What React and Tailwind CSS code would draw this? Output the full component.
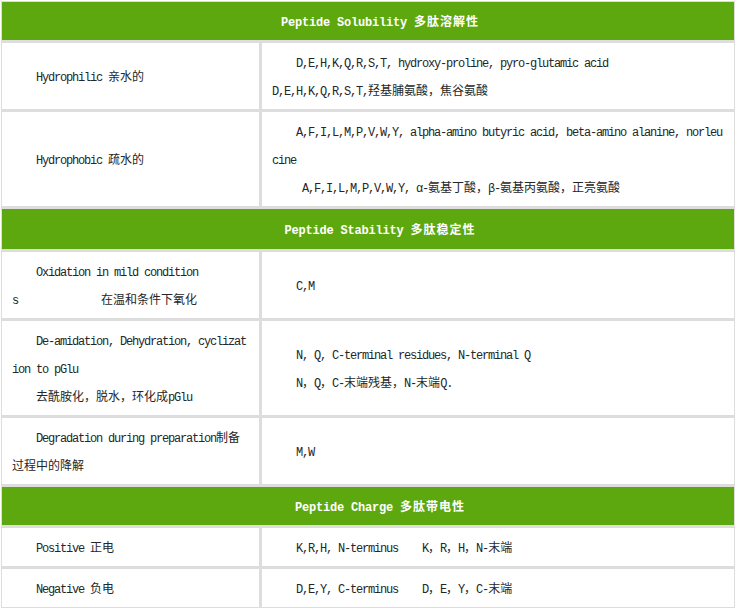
import React from "react";

const CJK = /([\u2E80-\u9FFF\u3000-\u303F\uFF00-\uFFEF]+)/;

// split a string into latin / cjk runs so each gets its own font
const Mix = ({ text, cjk = "tracking-normal" }) =>
  text.split(CJK).map((part, i) =>
    i % 2 ? (
      <span
        key={i}
        className={"font-['Noto_Sans_CJK_SC',sans-serif] leading-[12px] " + cjk}
      >
        {part}
      </span>
    ) : (
      <span key={i}>{part}</span>
    )
  );

const Header = ({ title, pad = "pt-[7px] pb-[3px]" }) => (
  <div
    className={
      "bg-[#5ea80f] text-center indent-[24px] text-[12px] leading-[28px] font-bold text-white tracking-[-0.2px] whitespace-pre-wrap " +
      pad
    }
  >
    <Mix text={title} cjk="tracking-[1px]" />
  </div>
);

const Cell = ({ children }) => (
  <div className="bg-white px-[10px] pt-[7px] pb-[3px] flex flex-col justify-center text-[12px] leading-[28px] text-[#262626] tracking-[-1.2px] whitespace-pre-wrap">
    {children}
  </div>
);

const Row = ({ left, right }) => (
  <div className="grid grid-cols-[257px_1fr] gap-[3px]">
    <Cell>{left}</Cell>
    <Cell>{right}</Cell>
  </div>
);

export default function App() {
  return (
    <div className="min-h-screen bg-white pt-px pl-px font-['Liberation_Mono','Noto_Sans_CJK_SC',monospace]">
      <div className="w-[734px] bg-[#dddddd] p-px flex flex-col gap-[3px]">
        <Header title="Peptide Solubility 多肽溶解性" />
        <Row
          left={
            <p className="indent-[24px]">
              <Mix text="Hydrophilic 亲水的" />
            </p>
          }
          right={
            <>
              <p className="indent-[24px]">
                <Mix text="D,E,H,K,Q,R,S,T, hydroxy-proline, pyro-glutamic acid" />
              </p>
              <p>
                <Mix text="D,E,H,K,Q,R,S,T,羟基脯氨酸，焦谷氨酸" />
              </p>
            </>
          }
        />
        <Row
          left={
            <p className="indent-[24px]">
              <Mix text="Hydrophobic 疏水的" />
            </p>
          }
          right={
            <>
              <p className="indent-[24px]">
                <Mix text="A,F,I,L,M,P,V,W,Y, alpha-amino butyric acid, beta-amino alanine, norleu" />
                <br />
                cine
              </p>
              <p className="indent-[30px]">
                <Mix text="A,F,I,L,M,P,V,W,Y, α-氨基丁酸，β-氨基丙氨酸，正亮氨酸" />
              </p>
            </>
          }
        />

        <Header title="Peptide Stability 多肽稳定性" pad="pt-[8px] pb-[4px]" />
        <Row
          left={
            <p className="indent-[24px]">
              Oxidation in mild condition
              <br />s
              <span className="ml-[83px]">
                <Mix text="在温和条件下氧化" />
              </span>
            </p>
          }
          right={<p className="indent-[24px]">C,M</p>}
        />
        <Row
          left={
            <>
              <p className="indent-[24px]">
                De-amidation, Dehydration, cyclizat
                <br />
                ion to pGlu
              </p>
              <p className="indent-[24px]">
                <Mix text="去酰胺化，脱水，环化成pGlu" />
              </p>
            </>
          }
          right={
            <>
              <p className="indent-[24px]">N, Q, C-terminal residues, N-terminal Q</p>
              <p className="indent-[24px]">
                <Mix text="N，Q，C-末端残基，N-末端Q." />
              </p>
            </>
          }
        />
        <Row
          left={
            <p className="indent-[24px]">
              <Mix text="Degradation during preparation制备" />
              <br />
              <Mix text="过程中的降解" />
            </p>
          }
          right={<p className="indent-[24px]">M,W</p>}
        />

        <Header title="Peptide Charge 多肽带电性" />
        <Row
          left={
            <p className="indent-[24px]">
              <Mix text="Positive 正电" />
            </p>
          }
          right={
            <p className="indent-[24px]">
              <Mix text="K,R,H, N-terminus    K，R，H，N-末端" />
            </p>
          }
        />
        <Row
          left={
            <p className="indent-[24px]">
              <Mix text="Negative 负电" />
            </p>
          }
          right={
            <p className="indent-[24px]">
              <Mix text="D,E,Y, C-terminus    D，E，Y，C-末端" />
            </p>
          }
        />
      </div>
    </div>
  );
}
